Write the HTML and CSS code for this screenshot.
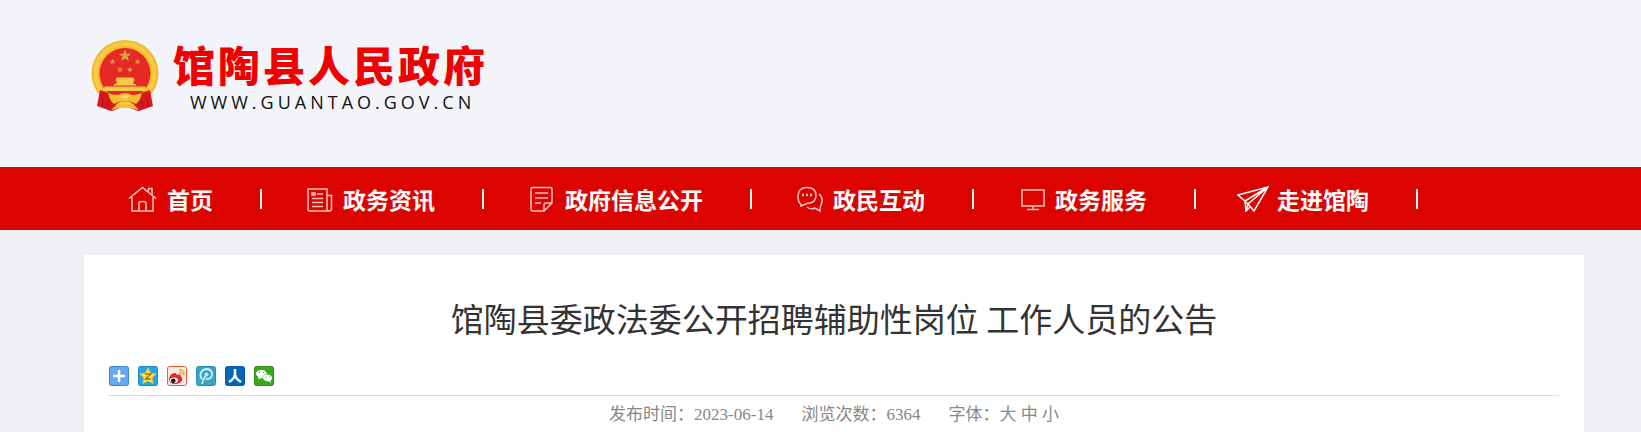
FILE: index.html
```html
<!DOCTYPE html>
<html lang="zh-CN">
<head>
  <meta charset="UTF-8">
  <meta name="viewport" content="width=device-width, initial-scale=1.0">
  <title>馆陶县人民政府</title>
  <link rel="stylesheet" href="styles.css">
</head>
<body>

<header class="header">
  <a class="logo" href="#">
    <svg class="emblem" viewBox="0 0 68 72" aria-hidden="true">
      <path d="M10 46L8 66L21 71L34 66L47 71L60 66L58 46Z" fill="#d3181c"/>
      <circle cx="34" cy="33.500" r="33.500" fill="#f1b92c"/>
      <circle cx="34" cy="33.500" r="29.500" fill="none" stroke="#f7cb46" stroke-width="4"/>
      <circle cx="34" cy="33.500" r="25.500" fill="#e52a26"/>
      <path d="M34 9L35.600 13.700H40.500L36.600 16.600L38 21.200L34 18.400L30 21.200L31.400 16.600L27.500 13.700H32.400Z" fill="#d9a13a"/>
      <path id="star" d="M21.500 18.500l.8 2.200h2.300l-1.800 1.400.7 2.200-2-1.300-2 1.300.7-2.200-1.800-1.400h2.300z" fill="#d9a13a"/>
      <use href="#star" x="25"/>
      <use href="#star" x="7.500" y="8"/>
      <use href="#star" x="17.500" y="8"/>
      <path d="M26 37.500H42L44 40.500H42.500V44H45V46H54L56 51H12L14 46H23V44H25.500V40.500H24Z" fill="#f6c845"/>
      <path d="M14 46H54" stroke="#e52a26"/>
      <path d="M9 50Q20 54 27 55Q34 51 41 55Q48 54 59 50L62 66L48 71L42 64Q38 60 34 62Q30 60 26 64L20 71L6 66Z" fill="#d8191c"/>
      <path d="M17 53Q22 55 27 55Q34 51 41 55Q46 55 51 53Q49 61 45 64Q38 60 34 62Q30 60 23 64Q19 61 17 53Z" fill="#f4bd2e"/>
      <path d="M12 58L11 66M17 61L16 68M56 58L57 66M51 61L52 68" stroke="#aa1015"/>
      <path d="M20 70L27 63L34 66L41 63L48 70L39 68H29Z" fill="#f2c03a"/>
      <path d="M29 57Q34 53 39 57Q34 60 29 57Z" fill="#f9dc78"/>
    </svg>
    <span class="logo-text">
      <strong class="logo-name">馆陶县人民政府</strong>
      <span class="logo-url">WWW.GUANTAO.GOV.CN</span>
    </span>
  </a>
</header>

<nav class="nav">
  <a href="#">
    <svg viewBox="0 0 32 26"><path d="M2 12.500L15.500 1.500L29 12.500M5 11V25H26V11M12 25V17Q12 15.500 15.500 15.500Q19 15.500 19 17V25M21.500 5.500V2.500H25V9"/></svg>
    首页
  </a>
  <a href="#">
    <svg viewBox="0 0 32 26"><path d="M24 9.500H28.500V22.500Q28.500 25 26 25H7Q5 25 5 23V3H24V22.500Q24 25 26 25M14 8H20M9 12.500H20M9 16.500H20M9 20.500H20"/><path d="M9 7H12V9H9Z"/></svg>
    政务资讯
  </a>
  <a href="#">
    <svg viewBox="0 0 32 26"><path d="M17 25H8Q6 25 6 23V3Q6 1.500 8 1.500H25Q27 1.500 27 3V17L19 25H17M19 25V19Q19 17 21 17H27M10 7H23M10 12H23M10 17H16"/></svg>
    政府信息公开
  </a>
  <a href="#">
    <svg viewBox="0 0 32 26"><path d="M8 18.500Q5 16 5 10.500Q5 1.500 14 1.500Q23 1.500 23 9.500Q23 17 14 17.500L8 20ZM26 8Q31 12 28 19Q27 21 27 25L22 22Q18 24 14 21"/><path d="M9 9H11M13 9H15M17 9H19" stroke-width="2.500"/></svg>
    政民互动
  </a>
  <a href="#">
    <svg viewBox="0 0 32 26"><path d="M7 4H29V20H7ZM18 20V23.500M12 23.500H24"/></svg>
    政务服务
  </a>
  <a href="#">
    <svg class="plane" viewBox="0 0 32 26"><path d="M1 9L31 1L17 25L11 18ZM1 9L8 15L31 1L11 18L9 25L14 20M8 15L9 25"/></svg>
    走进馆陶
  </a>
</nav>

<main class="article">
  <h1>馆陶县委政法委公开招聘辅助性岗位 工作人员的公告</h1>

  <div class="share">
    <a href="#" aria-label="分享">
      <svg viewBox="0 0 20 20"><rect x=".5" y=".5" width="19" height="19" rx="2" fill="#66a8f4" stroke="#3e82d2"/><path d="M10 4V16M4 10H16" stroke="#fff" stroke-width="2.500"/></svg>
    </a>
    <a href="#" aria-label="QQ空间">
      <svg viewBox="0 0 20 20"><rect x=".5" y=".5" width="19" height="19" rx="2" fill="#24a5ec" stroke="#1686cf"/><path d="M10 1.500L12.600 7L18.500 7.700L14.200 11.800L15.300 17.800L10 14.900L4.700 17.800L5.800 11.800L1.500 7.700L7.400 7Z" fill="#ffe044" stroke="#e8b51c" stroke-width=".5"/><path d="M7 8H13L7.500 13H13" fill="none" stroke="#a96913" stroke-width="1.300"/></svg>
    </a>
    <a href="#" aria-label="新浪微博">
      <svg viewBox="0 0 20 20"><rect x=".5" y=".5" width="19" height="19" rx="2" fill="#f7e9df" stroke="#e55d38"/><path d="M2 13Q3 7 8 7Q10 7 9.500 9Q14 7 14 11Q16 12 15 14.500Q13 18 8 18Q2 18 2 13Z" fill="#e32630"/><ellipse cx="7" cy="14.200" rx="4" ry="2.800" fill="#fff"/><circle cx="6.300" cy="14.700" r="2.300" fill="#171214"/><path d="M12 4Q17 3.500 17 9M12.500 6.500Q14.500 6.500 14.500 8.500" fill="none" stroke="#f3a033" stroke-width="1.500"/></svg>
    </a>
    <a href="#" aria-label="腾讯微博">
      <svg viewBox="0 0 20 20"><rect x=".5" y=".5" width="19" height="19" rx="2" fill="#37a4c3" stroke="#268eaf"/><path d="M6 18Q7 13 10 9.500M6 13Q3.500 10 5 6.500Q7 3 11 3Q16 3.500 16 8.500Q15.500 13.500 10 13" fill="none" stroke="#d7eff7" stroke-width="1.800"/><circle cx="10.500" cy="8.500" r="2" fill="#b9e2ef"/></svg>
    </a>
    <a href="#" aria-label="人人网">
      <svg viewBox="0 0 20 20"><rect x=".5" y=".5" width="19" height="19" rx="2" fill="#0c65bd" stroke="#0756a6"/><path d="M10 3V8Q9.500 13 4 16M10 8Q10.500 13 16 16" fill="none" stroke="#fff" stroke-width="2.500"/></svg>
    </a>
    <a href="#" aria-label="微信">
      <svg viewBox="0 0 20 20"><rect x=".5" y=".5" width="19" height="19" rx="2" fill="#39a81c" stroke="#2d9114"/><path d="M4 13L4.500 11Q2 9.500 2 7.500Q2.500 4 7.500 4Q12 4 13 8Q9 8.500 8.500 12Z" fill="#fff"/><path d="M9 11.500Q9.500 8.500 13.500 8.500Q18 9 18 12Q18 13.500 16.500 14.500L17 16.500L14.500 15.200Q9.500 15.500 9 11.500Z" fill="#fff"/><path d="M5 6.500H6M9 6.500H10M11.500 11H12.500M15 11H16" stroke="#39a81c" stroke-width="1.200"/></svg>
    </a>
  </div>

  <div class="meta">
    <span>发布时间：2023-06-14</span>
    <span>浏览次数：6364</span>
    <span>字体：<a href="#">大</a> <a href="#">中</a> <a href="#">小</a></span>
  </div>
</main>

</body>
</html>
```
FILE: styles.css
```css
body {
  margin: 0;
  background: #f0eff5;
  font-family: "Noto Sans CJK SC", sans-serif;
}
a {
  color: inherit;
  text-decoration: none;
}
svg {
  display: block;
}

.header {
  background: #f3f4f9;
  padding: 36px 57px 0 91px;
  height: 131px;
}
.logo {
  display: inline-flex;
  align-items: flex-end;
  gap: 14px;
}
.emblem {
  width: 68px;
  height: 72px;
}
.logo-text {
  display: flex;
  flex-direction: column;
}
.logo-name {
  color: #f00000;
  font-size: 42px;
  font-weight: 900;
  line-height: 56px;
  letter-spacing: 3px;
}
.logo-url {
  color: #111;
  font-family: "Open Sans", sans-serif;
  font-size: 18px;
  line-height: 20px;
  letter-spacing: 4px;
  padding-left: 17px;
}

.nav {
  display: flex;
  align-items: center;
  background: #dc0400;
  height: 63px;
  padding: 0 57px 0 86px;
}
.nav a {
  display: flex;
  align-items: center;
  gap: 8px;
  height: 20px;
  padding: 0 47px 0 41px;
  border-right: 2px solid #fff;
  color: #fff;
  font-size: 23px;
  font-weight: bold;
  line-height: 20px;
  white-space: nowrap;
}
.nav svg {
  width: 32px;
  height: 26px;
  fill: none;
  stroke: #ffc4c0;
  stroke-width: 1.5;
}
.nav .plane {
  stroke: #fff;
}

.article {
  margin: 25px 57px 0 84px;
  padding: 38px 25px 0;
  background: #fff;
}
.article h1 {
  margin: 0;
  color: #333;
  font-size: 33px;
  font-weight: normal;
  line-height: 50px;
  text-align: center;
}
.share {
  display: flex;
  gap: 9px;
  padding: 23px 0 9px;
  border-bottom: 1px solid #ddd;
}
.share svg {
  width: 20px;
  height: 20px;
}
.meta {
  display: flex;
  justify-content: center;
  gap: 28px;
  color: #888;
  font-family: "Liberation Serif", "Noto Sans CJK SC", serif;
  font-size: 17px;
  line-height: 38px;
}
```
